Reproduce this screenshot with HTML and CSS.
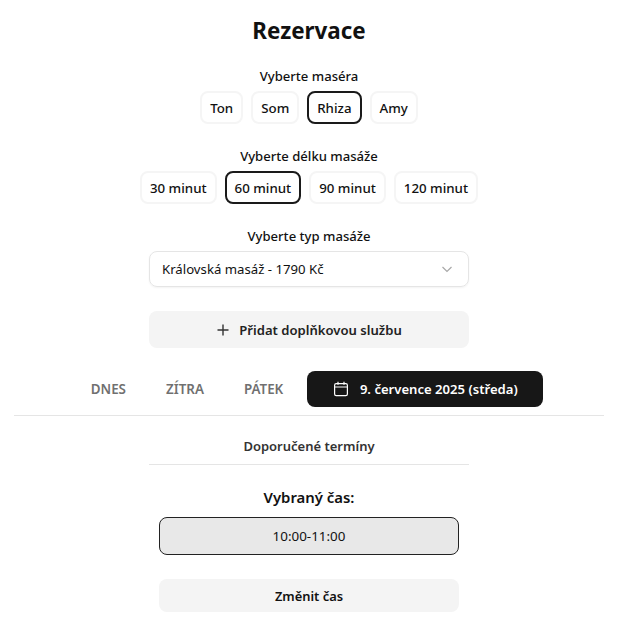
FILE: index.html
```html
<!DOCTYPE html>
<html lang="cs">
<head>
    <meta charset="UTF-8">
    <meta name="viewport" content="width=device-width, initial-scale=1.0">
    <title>Rezervace</title>
    <link rel="stylesheet" href="styles.css">
</head>
<body>
    <div class="page">
        <h1>Rezervace</h1>

        <div class="label">Vyberte maséra</div>
        <div class="options">
            <button class="option">Ton</button>
            <button class="option">Som</button>
            <button class="option selected">Rhiza</button>
            <button class="option">Amy</button>
        </div>

        <div class="label">Vyberte délku masáže</div>
        <div class="options">
            <button class="option">30 minut</button>
            <button class="option selected">60 minut</button>
            <button class="option">90 minut</button>
            <button class="option">120 minut</button>
        </div>

        <div class="label">Vyberte typ masáže</div>
        <div class="select">
            <span>Královská masáž - 1790 Kč</span>
            <svg class="chevron" width="16" height="16" viewBox="0 0 16 16" fill="none" stroke="#a8a8a8" stroke-width="1.2"><path d="M3.5 6 8 10.5 12.5 6"/></svg>
        </div>

        <button class="add-btn">
            <svg width="14" height="14" viewBox="0 0 14 14" fill="none" stroke="#333" stroke-width="1.4"><path d="M7 1.5v11M1.5 7h11"/></svg>
            Přidat doplňkovou službu
        </button>

        <div class="tabs">
            <button class="tab">DNES</button>
            <button class="tab">ZÍTRA</button>
            <button class="tab">PÁTEK</button>
            <button class="tab-date">
                <svg width="16" height="16" viewBox="0 0 16 16" fill="none" stroke="#fff" stroke-width="1.2"><rect x="1.6" y="2.6" width="12.8" height="12" rx="1.6"/><path d="M1.6 6h12.8M5 .8v3M11 .8v3"/></svg>
                9. července 2025 (středa)
            </button>
        </div>

        <div class="recommended">Doporučené termíny</div>

        <div class="chosen-label">Vybraný čas:</div>
        <div class="chosen-time">10:00-11:00</div>
        <button class="change-btn">Změnit čas</button>
    </div>
</body>
</html>
```

FILE: styles.css
```css
body {
    font-family: "Noto Sans", "Open Sans", sans-serif;
    margin: 0;
    background-color: #fff;
    color: #111;
}
button {
    font-family: inherit;
    cursor: pointer;
}
.page {
    display: flex;
    flex-direction: column;
    align-items: center;
    padding: 15px 3px 0 0;
}
h1 {
    margin: 0 0 20px;
    font-size: 22.4px;
    line-height: 32px;
    font-weight: 700;
}
.label {
    font-size: 13.1px;
    line-height: 18px;
    font-weight: 500;
    margin-bottom: 6px;
}
.options {
    display: flex;
    gap: 8px;
    margin-bottom: 23px;
}
.option {
    height: 33px;
    padding: 0 8px;
    font-size: 13.3px;
    font-weight: 500;
    color: #111;
    background-color: #fff;
    border: 2px solid #f5f5f5;
    border-radius: 8px;
}
.option.selected {
    border-color: #1a1a1a;
}
.select {
    box-sizing: border-box;
    display: flex;
    justify-content: space-between;
    align-items: center;
    width: 320px;
    height: 36px;
    padding: 0 13px 0 12px;
    font-size: 13.2px;
    border: 1px solid #e5e5e5;
    border-radius: 8px;
    box-shadow: 0 1px 2px rgba(0, 0, 0, 0.05);
    margin-bottom: 24px;
}
.add-btn {
    display: flex;
    justify-content: center;
    align-items: center;
    gap: 9px;
    width: 320px;
    height: 37px;
    font-size: 13.1px;
    font-weight: 600;
    color: #222;
    background-color: #f4f4f4;
    border: none;
    border-radius: 8px;
    margin-bottom: 23px;
}
.tabs {
    box-sizing: border-box;
    display: flex;
    align-items: center;
    justify-content: center;
    gap: 40px;
    width: 590px;
    height: 45px;
    padding: 0 0 9px 16px;
    border-bottom: 1px solid #e5e5e5;
}
.tab {
    padding: 0;
    font-size: 13.4px;
    font-weight: 600;
    color: #707070;
    background: none;
    border: none;
}
.tab-date {
    display: flex;
    align-items: center;
    justify-content: center;
    gap: 11px;
    width: 236px;
    height: 36px;
    margin-left: -16px;
    font-size: 13.1px;
    font-weight: 600;
    color: #fff;
    background-color: #171717;
    border: none;
    border-radius: 8px;
}
.recommended {
    box-sizing: border-box;
    width: 320px;
    padding: 20px 0 8px;
    text-align: center;
    font-size: 13px;
    line-height: 20px;
    font-weight: 600;
    color: #333;
    border-bottom: 1px solid #e5e5e5;
    margin-bottom: 21px;
}
.chosen-label {
    font-size: 14.9px;
    line-height: 22px;
    font-weight: 600;
    margin-bottom: 9px;
}
.chosen-time {
    box-sizing: border-box;
    width: 300px;
    height: 38px;
    line-height: 36px;
    text-align: center;
    font-size: 13.4px;
    background-color: #e8e8e8;
    border: 1px solid #222;
    border-radius: 8px;
    margin-bottom: 24px;
}
.change-btn {
    width: 300px;
    height: 33px;
    font-size: 12.9px;
    font-weight: 600;
    color: #111;
    background-color: #f4f4f4;
    border: none;
    border-radius: 8px;
}
```
